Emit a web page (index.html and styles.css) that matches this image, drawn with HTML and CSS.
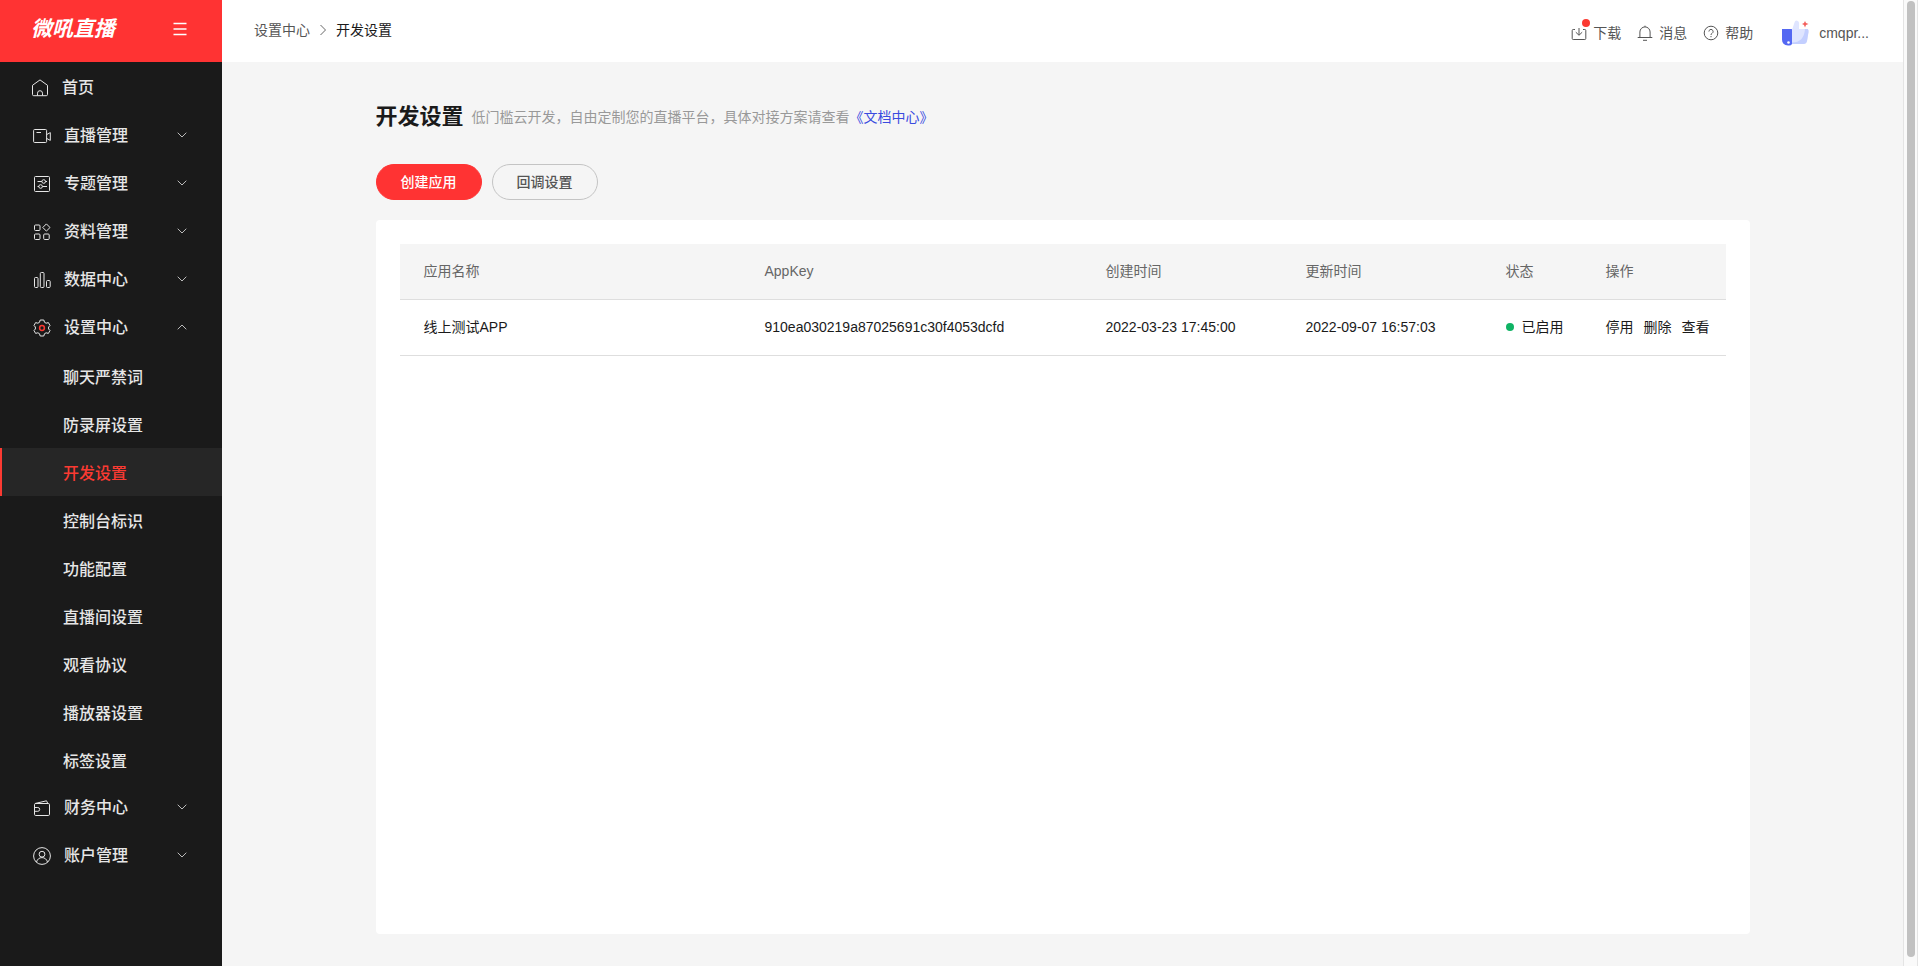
FILE: index.html
```html
<!DOCTYPE html>
<html lang="zh-CN">
<head>
<meta charset="utf-8">
<title>开发设置</title>
<link rel="stylesheet" href="styles.css">
</head>
<body>
<div class="shell">
  <aside class="sidebar">
    <div class="brand">
      <a class="logo" href="#">微吼直播</a>
      <button class="collapse" type="button" aria-label="收起菜单">
        <svg width="14" height="14" viewBox="0 0 14 14"><path d="M.5 1.500h13M.5 7h13M.5 12.500h13" stroke-width="1.500"/></svg>
      </button>
    </div>
    <nav class="menu">
      <a class="item home" href="#">
        <svg class="icon" viewBox="0 0 18 18"><path d="M1.500 6.300v9.200a1.200 1.200 0 0 0 1.200 1.200h12.600a1.200 1.200 0 0 0 1.200-1.200V6.300L9 .9z"/><path d="M6.500 16.500v-2.300a2.500 2.500 0 0 1 5 0v2.300"/></svg>
        <span>首页</span>
      </a>
      <button class="item" type="button">
        <svg class="icon" viewBox="0 0 18 18"><rect x=".6" y="2.500" width="13" height="13" rx="1"/><path d="M3.500 5.500h4.500M13.600 7.600l3.700-2v7.800l-3.700-2"/></svg>
        <span>直播管理</span>
        <svg class="arrow" viewBox="0 0 10 6"><path d="M.7.700 5 5 9.300.7"/></svg>
      </button>
      <button class="item" type="button">
        <svg class="icon" viewBox="0 0 18 18"><rect x="1.500" y="1.500" width="15" height="15" rx="1"/><path d="M4.500 6.500h4.400M12.500 6.500h1.500M4.500 11.500H6M9.400 11.500H14"/><circle cx="10.700" cy="6.500" r="1.800"/><circle cx="7.600" cy="11.500" r="1.800"/></svg>
        <span>专题管理</span>
        <svg class="arrow" viewBox="0 0 10 6"><path d="M.7.700 5 5 9.300.7"/></svg>
      </button>
      <button class="item" type="button">
        <svg class="icon" viewBox="0 0 18 18"><rect x="1.500" y="2" width="5.500" height="5.500" rx="1"/><path d="M13.400.900 17 4.500l-3.600 3.600L9.800 4.500z" stroke-linejoin="round"/><rect x="1.500" y="11" width="5.500" height="5.500" rx="1"/><rect x="10.700" y="11" width="5.500" height="5.500" rx="1"/></svg>
        <span>资料管理</span>
        <svg class="arrow" viewBox="0 0 10 6"><path d="M.7.700 5 5 9.300.7"/></svg>
      </button>
      <button class="item" type="button">
        <svg class="icon" viewBox="0 0 18 18"><rect x="1.500" y="6.500" width="3.500" height="10" rx="1"/><rect x="7.300" y="1.500" width="3.700" height="15" rx="1"/><rect x="13.500" y="9.500" width="3.700" height="7" rx="1"/></svg>
        <span>数据中心</span>
        <svg class="arrow" viewBox="0 0 10 6"><path d="M.7.700 5 5 9.300.7"/></svg>
      </button>
      <button class="item" type="button" aria-expanded="true">
        <svg class="icon" viewBox="0 0 18 18"><path d="M7.200 1h3.600l.7 2.300 1.600.9 2.300-.6 1.600 2.900-1.400 1.500v2l1.400 1.500-1.600 2.900-2.300-.6-1.600.9-.7 2.300H7.200l-.7-2.300-1.600-.9-2.300.6L1 11.500 2.400 10V8L1 6.500l1.600-2.900 2.300.6 1.600-.9z" stroke-linejoin="round"/><circle class="hub" cx="9" cy="9" r="2.400"/></svg>
        <span>设置中心</span>
        <svg class="arrow" viewBox="0 0 10 6"><path d="M.7 5.300 5 1l4.300 4.300"/></svg>
      </button>
      <div class="submenu">
        <a class="sub" href="#">聊天严禁词</a>
        <a class="sub" href="#">防录屏设置</a>
        <a class="sub active" href="#" aria-current="page">开发设置</a>
        <a class="sub" href="#">控制台标识</a>
        <a class="sub" href="#">功能配置</a>
        <a class="sub" href="#">直播间设置</a>
        <a class="sub" href="#">观看协议</a>
        <a class="sub" href="#">播放器设置</a>
        <a class="sub" href="#">标签设置</a>
      </div>
      <button class="item" type="button">
        <svg class="icon" viewBox="0 0 18 18"><rect x="1.500" y="4.500" width="15" height="12" rx="1.200"/><path d="M2 4.500 13.500 1.800l1.300 2.700M1.500 8.500h3.300a1.900 1.900 0 0 1 0 3.800H1.500"/></svg>
        <span>财务中心</span>
        <svg class="arrow" viewBox="0 0 10 6"><path d="M.7.700 5 5 9.300.7"/></svg>
      </button>
      <button class="item" type="button">
        <svg class="icon" viewBox="0 0 18 18"><circle cx="9" cy="9" r="8.400"/><circle cx="9" cy="7.200" r="2.900"/><path d="M3.500 15c.8-2.800 2.800-4.400 5.500-4.400s4.700 1.600 5.500 4.400"/></svg>
        <span>账户管理</span>
        <svg class="arrow" viewBox="0 0 10 6"><path d="M.7.700 5 5 9.300.7"/></svg>
      </button>
    </nav>
  </aside>

  <div class="page">
    <header class="topbar">
      <nav class="crumbs" aria-label="面包屑">
        <a href="#">设置中心</a>
        <svg width="8" height="12" viewBox="0 0 8 12"><path d="M1.500 1 6.500 6l-5 5" stroke-width=".9"/></svg>
        <span class="current">开发设置</span>
      </nav>
      <div class="tools">
        <a class="tool" href="#">
          <svg viewBox="0 0 16 16"><path d="M4 4.500H2.200a1 1 0 0 0-1 1v8a1 1 0 0 0 1 1h11.600a1 1 0 0 0 1-1v-8a1 1 0 0 0-1-1H12M8 3v7M4.800 7.200 8 10.300l3.200-3.100"/></svg>
          <i class="dot"></i>
          <span>下载</span>
        </a>
        <a class="tool" href="#">
          <svg viewBox="0 0 16 16"><path d="M.7 12.500h14.600M2.900 12.500V7a5.100 5.100 0 0 1 10.200 0v5.500M8 1.900V.7M6 15.300h4"/></svg>
          <span>消息</span>
        </a>
        <a class="tool" href="#">
          <svg viewBox="0 0 16 16"><circle cx="8" cy="8" r="6.800"/><path d="M5.900 6.500a2.100 2.100 0 1 1 3.200 1.800c-.8.500-1.100.8-1.100 1.600M8 11v1.200"/></svg>
          <span>帮助</span>
        </a>
        <a class="user" href="#">
          <svg width="28" height="28" viewBox="0 0 28 28">
            <path d="M11 11 13.500 3.500q.4-2 2-2 3 .5 2.600 4L18 10h7q2.500 0 2.500 3L26 22q-.6 3-3.500 3H11z" fill="#dfe5ff"/>
            <path d="M26.800 10q1.100 1 .7 3L26 22q-.6 3-3.500 3H11v-1.500q12 0 13-13.500z" fill="#c3cfff"/>
            <path d="M1 10h9.500q.5 0 .5.500V25q-1 2-4 1.500-6-.5-6-6z" fill="#5468f2"/>
            <circle cx="7.500" cy="23.500" r="1.300" fill="#fff"/>
            <path d="m24 2 1 2 2.500 1-2.500 1-1 2.500L23 6l-2-1 2-1z" fill="#f4605c"/>
          </svg>
          <span>cmqpr...</span>
        </a>
      </div>
    </header>

    <main class="content">
      <div class="heading">
        <h1>开发设置</h1>
        <p>低门槛云开发，自由定制您的直播平台，具体对接方案请查看<a href="#">《文档中心》</a></p>
      </div>
      <div class="actions">
        <button class="btn primary" type="button">创建应用</button>
        <button class="btn" type="button">回调设置</button>
      </div>
      <section class="card">
        <table class="apps">
          <colgroup><col><col><col class="time"><col class="time"><col class="state"><col class="ops"></colgroup>
          <thead>
            <tr><th>应用名称</th><th>AppKey</th><th>创建时间</th><th>更新时间</th><th>状态</th><th>操作</th></tr>
          </thead>
          <tbody>
            <tr>
              <td>线上测试APP</td>
              <td>910ea030219a87025691c30f4053dcfd</td>
              <td>2022-03-23 17:45:00</td>
              <td>2022-09-07 16:57:03</td>
              <td><span class="status">已启用</span></td>
              <td><div class="links"><a href="#">停用</a><a href="#">删除</a><a href="#">查看</a></div></td>
            </tr>
          </tbody>
        </table>
      </section>
    </main>
  </div>

  <div class="scrollbar" aria-hidden="true"><div class="thumb"></div></div>
</div>
</body>
</html>
```
FILE: styles.css
```css
* { box-sizing: border-box; }

body {
  margin: 0;
  font: 14px/20px "Liberation Sans", "Noto Sans CJK SC", sans-serif;
  color: #1a1a1a;
  background: #f5f5f5;
}

a { color: inherit; text-decoration: none; }
button { font: inherit; cursor: pointer; }
svg { fill: none; stroke: currentColor; flex: none; }

.shell {
  display: grid;
  grid-template-columns: 222px 1fr 15px;
  min-height: 100vh;
}

/* Sidebar */
.sidebar { background: #1a1a1a; color: #e6e6e6; }

.brand {
  display: flex;
  align-items: center;
  justify-content: space-between;
  height: 62px;
  padding: 0 35px 4px 31px;
  background: #ff3333;
  color: #fff;
}
.logo { font-size: 21px; line-height: 28px; font-weight: 700; font-style: italic; }
.collapse {
  display: flex;
  padding: 0;
  border: 0;
  background: none;
  color: #fff;
}

.menu { padding-top: 2px; font-size: 16px; font-weight: 500; }
.item {
  display: flex;
  align-items: center;
  gap: 13px;
  width: 100%;
  height: 48px;
  padding: 0 35px 0 33px;
  border: 0;
  background: none;
  color: inherit;
  text-align: left;
}
.icon { width: 18px; height: 18px; }
.home { padding-left: 31px; }
.arrow { width: 10px; height: 6px; margin: 0 0 3px auto; color: #bbb; }
.hub { stroke: #fb3a32; stroke-width: 1.5; }

.sub {
  display: flex;
  align-items: center;
  height: 48px;
  padding: 4px 0 0 61px;
  border-left: 2px solid transparent;
}
.sub.active { border-color: #fb3a32; background: #262626; color: #fb3a32; }

/* Page */
.page { display: flex; flex-direction: column; min-width: 0; }

.topbar {
  display: flex;
  justify-content: space-between;
  height: 62px;
  padding: 0 34px 0 32px;
  background: #fff;
  color: #555;
}
.crumbs { display: flex; align-items: center; gap: 9px; padding-bottom: 3px; }
.crumbs .current { color: #1a1a1a; }
.tools { display: flex; align-items: center; gap: 16px; padding-top: 3px; }
.tool { position: relative; display: flex; align-items: center; gap: 6px; }
.tool svg { width: 16px; height: 16px; }
.dot {
  position: absolute;
  left: 11px;
  top: -4px;
  width: 8px;
  height: 8px;
  border-radius: 50%;
  background: #fb3a32;
}
.user { display: flex; align-items: center; gap: 10px; padding-left: 12px; }
.user svg { stroke: none; }

.content {
  display: flex;
  flex-direction: column;
  flex: 1;
  width: 100%;
  max-width: 1438px;
  margin: 0 auto;
  padding: 40px 32px 32px;
}
.heading { display: flex; align-items: center; gap: 8px; }
h1 { margin: 0; font-size: 22px; line-height: 30px; font-weight: 700; }
.heading p { margin: 0; color: #999; }
.heading a { color: #3a4bdf; }

.actions { display: flex; gap: 10px; margin: 32px 0 20px; }
.btn {
  height: 36px;
  padding: 0 24px;
  border: 1px solid #c4c4c4;
  border-radius: 18px;
  background: none;
  color: #555;
  font-weight: 500;
}
.btn.primary { border-color: #ff3333; background: #ff3333; color: #fff; }

.card { flex: 1; padding: 24px; border-radius: 4px; background: #fff; }

.apps { width: 100%; table-layout: fixed; border-collapse: separate; border-spacing: 0; }
.time { width: 200px; }
.state { width: 100px; }
.ops { width: 144px; }
th, td {
  height: 56px;
  padding: 0 0 2px 24px;
  border-bottom: 1px solid #dedede;
  text-align: left;
  font-weight: 400;
  white-space: nowrap;
}
th { background: #f5f5f5; color: #666; }
.status { display: flex; align-items: center; gap: 8px; }
.status::before {
  content: "";
  width: 8px;
  height: 8px;
  border-radius: 50%;
  background: #0fb364;
}
.links { display: flex; gap: 10px; }

/* Scroll track */
.scrollbar {
  padding: 1px 2px 9px 3px;
  border: solid #e4e4e4;
  border-width: 0 1px;
  background: #fafafa;
}
.thumb { height: 100%; border-radius: 4px; background: #c1c1c1; }
```
